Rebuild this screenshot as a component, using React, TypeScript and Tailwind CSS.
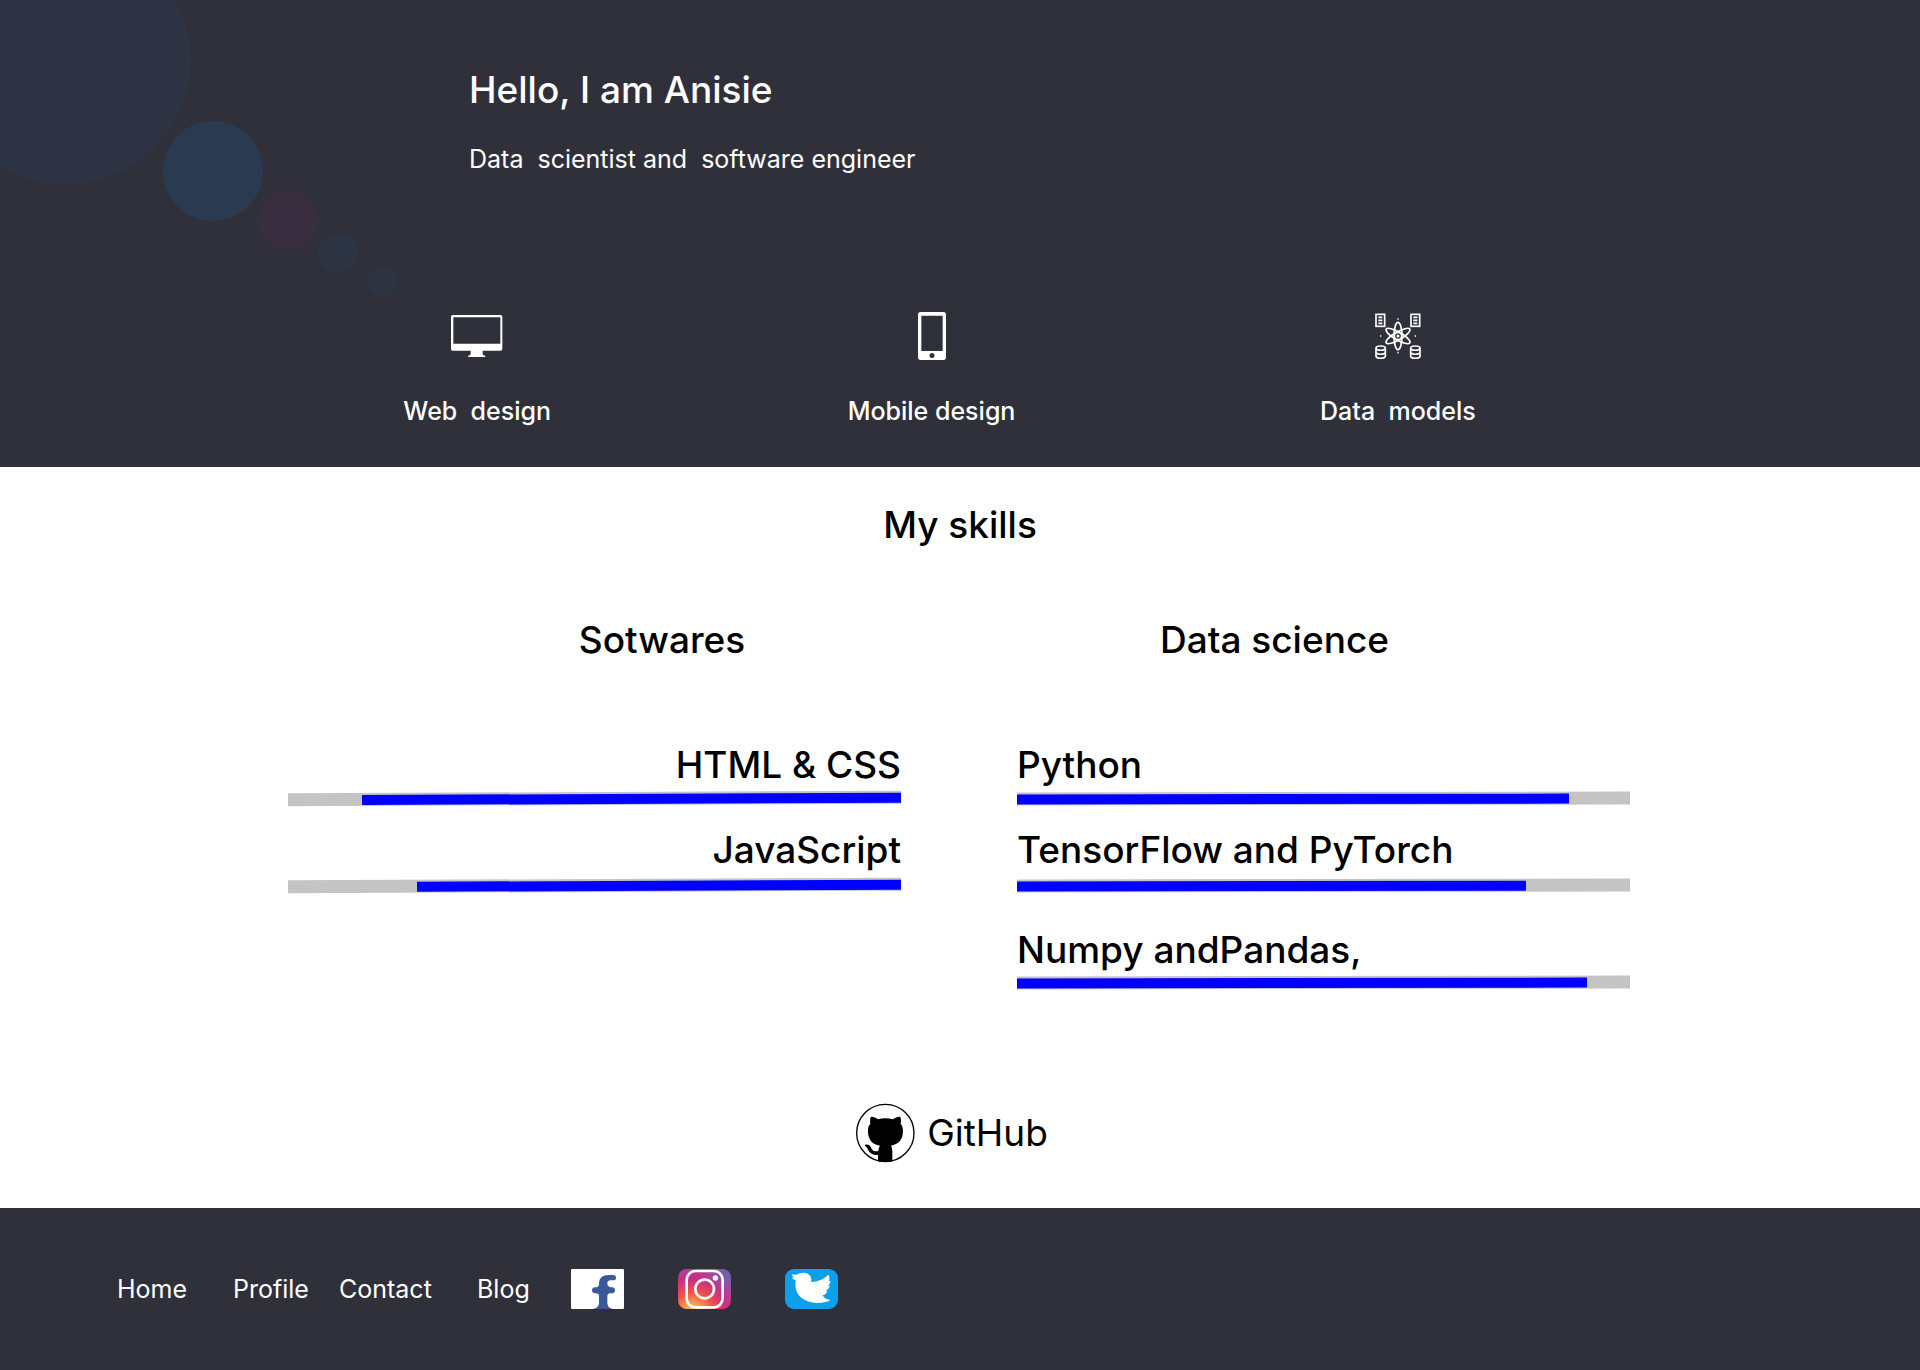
import React from "react";

const MonitorIcon = () => (
  <svg viewBox="0 0 156 126" className="h-[42px] w-[52px]" fill="white" aria-hidden="true">
    <path
      fillRule="evenodd"
      d="M5 0H149Q154 0 154 5V102Q154 107 149 107H95V117Q96 121 103 123V126H51V123Q58 121 59 117V107H5Q0 107 0 102V5Q0 0 5 0ZM7 7V86H148V7Z"
    />
  </svg>
);

const PhoneIcon = () => (
  <svg viewBox="0 0 84 144" className="h-12 w-7" fill="white" aria-hidden="true">
    <path
      fillRule="evenodd"
      d="M8 0H76Q84 0 84 8V136Q84 144 76 144H8Q0 144 0 136V8Q0 0 8 0ZM10 11V117H74V11ZM42 123A7.500 7.500 0 1 0 42 138A7.500 7.500 0 1 0 42 123Z"
    />
  </svg>
);

const Sheet = ({ x }: { x: number }) => (
  <g>
    <rect x={x} y="4" width="26" height="36" />
    <path d={`M${x + 7} 13h12M${x + 7} 22h12M${x + 7} 31h12`} />
  </g>
);

const Cylinder = ({ x }: { x: number }) => (
  <path
    d={`M${x} 105v24c0 9 28 9 28 0v-24c0-8-28-8-28 0c0 9 28 9 28 0M${x} 117c0 9 28 9 28 0`}
  />
);

const DataIcon = () => (
  <svg viewBox="0 0 138 138" className="size-[46px]" fill="none" stroke="white" strokeWidth="5" aria-hidden="true">
    <Sheet x={3} />
    <Sheet x={108} />
    <Cylinder x={3} />
    <Cylinder x={107} />
    <ellipse cx="69" cy="69" rx="12" ry="41" />
    <ellipse cx="69" cy="69" rx="12" ry="41" transform="rotate(60 69 69)" />
    <ellipse cx="69" cy="69" rx="12" ry="41" transform="rotate(-60 69 69)" />
    <circle cx="69" cy="69" r="11" />
    <circle cx="69" cy="69" r="2" />
    <path d="M67 18h4M15 69h4M119 69h4M67 119h4" />
  </svg>
);

const GitHubLogo = () => (
  <svg viewBox="0 0 177 180" className="h-[60px] w-[59px] shrink-0" aria-hidden="true">
    <clipPath id="disc">
      <circle cx="88" cy="90" r="87" />
    </clipPath>
    <circle cx="88" cy="90" r="86" fill="white" stroke="black" strokeWidth="4" />
    <path
      clipPath="url(#disc)"
      d="M44 42C50 40 58 44 66 49C80 45 97 45 111 49C119 44 127 40 133 42C136 50 135 56 134 62C141 70 142 82 140 94C138 112 127 124 105 128C108 134 109 140 109 146V178H66V155C50 158 42 150 38 144C35 138 33 131 26 128C26 124 34 123 39 126C46 131 46 141 54 144C60 146 64 145 67 143C68 136 69 132 72 128C50 124 40 113 37 96C34 80 36 70 43 62C42 56 42 48 44 42Z"
    />
  </svg>
);

const FacebookLogo = () => (
  <svg viewBox="0 0 159 120" className="h-10 w-[53px]" aria-hidden="true">
    <rect width="159" height="120" rx="4" fill="white" />
    <path
      fill="#3b5998"
      d="M66 120C78 118 84 112 84 100V80Q84 74 77 73H72Q63 72 63 64T72 55H78Q84 54 84 46C84 26 94 18 114 18H126Q135 18 135 26T126 34H119Q109 34 109 43T119 55H124Q132 56 132 64T124 73H117Q109 74 109 82V98C109 112 114 118 128 120Z"
    />
  </svg>
);

const InstagramLogo = () => (
  <svg viewBox="0 0 159 120" className="h-10 w-[53px]" aria-hidden="true">
    <defs>
      <radialGradient id="warm" gradientUnits="userSpaceOnUse" cx="45" cy="130" r="135">
        <stop offset="0" stopColor="#fdd269" />
        <stop offset="0.150" stopColor="#fbad50" />
        <stop offset="0.450" stopColor="#f15245" />
        <stop offset="0.750" stopColor="#c92d86" />
        <stop offset="1" stopColor="#a84a9c" />
      </radialGradient>
      <radialGradient id="cool" gradientUnits="userSpaceOnUse" cx="159" cy="10" r="75">
        <stop offset="0" stopColor="#4f6fb8" />
        <stop offset="1" stopColor="#9b46a7" stopOpacity="0" />
      </radialGradient>
    </defs>
    <rect width="159" height="120" rx="26" fill="url(#warm)" />
    <rect width="159" height="120" rx="26" fill="url(#cool)" />
    <g fill="none" stroke="white" strokeWidth="8">
      <rect x="26" y="6" width="108" height="109" rx="27" />
      <circle cx="80" cy="60" r="28" />
    </g>
    <circle cx="112" cy="27" r="8" fill="white" />
  </svg>
);

const TwitterLogo = () => (
  <svg viewBox="0 0 159 120" className="h-10 w-[53px]" aria-hidden="true">
    <rect width="159" height="120" rx="27" fill="#0b9fec" />
    <path
      fill="white"
      d="M21 15C25 17 29 17 34 17C40 13 48 11 57 11C70 12 79 20 79 32V39C98 38 117 30 130 17C135 24 134 30 131 36L136 35C136 42 133 47 128 50L134 50C132 58 128 62 122 65L127 66C125 73 120 77 113 79C117 88 126 92 137 93C125 100 112 102 98 102C70 102 45 90 36 70C31 58 30 46 32 34C27 33 23 30 21 25L28 26C24 23 21 20 21 15Z"
    />
  </svg>
);

const services = [
  { label: "Web  design", icon: <MonitorIcon /> },
  { label: "Mobile design", icon: <PhoneIcon /> },
  { label: "Data  models", icon: <DataIcon /> },
];

type Skill = { name: string; value: number; gap: string; space: string };

const software: Skill[] = [
  { name: "HTML & CSS", value: 88, gap: "mt-0.5", space: "" },
  { name: "JavaScript", value: 79, gap: "mt-1", space: "mt-5" },
];

const dataScience: Skill[] = [
  { name: "Python", value: 90, gap: "mt-0.5", space: "" },
  { name: "TensorFlow and PyTorch", value: 83, gap: "mt-1", space: "mt-5" },
  { name: "Numpy andPandas,", value: 93, gap: "mt-px", space: "mt-[33px]" },
];

const SkillBar = ({ skill, reversed }: { skill: Skill; reversed?: boolean }) => (
  <li className={skill.space}>
    <p className={reversed ? "text-right text-[37px]/[50px] font-medium" : "text-[37px]/[50px] font-medium"}>
      {skill.name}
    </p>
    <div
      role="progressbar"
      aria-label={skill.name}
      aria-valuenow={skill.value}
      aria-valuemin={0}
      aria-valuemax={100}
      className={`flex h-[13px] bg-[#c4c4c4] pt-0.5 pb-px ${skill.gap} ${
        reversed ? "-skew-y-[0.25deg] justify-end" : "-skew-y-[0.1deg]"
      }`}
    >
      <div className="bg-[#0000ff]" style={{ width: `${skill.value}%` }} />
    </div>
  </li>
);

const links = [
  { label: "Home", width: "w-[116px]" },
  { label: "Profile", width: "w-[106px]" },
  { label: "Contact", width: "w-[138px]" },
  { label: "Blog", width: "w-[94px]" },
];

export default function App() {
  return (
    <div className="bg-white font-['Inter',sans-serif] text-black">
      <header className="relative overflow-hidden bg-[#30303a] pt-[63px] pb-[38px] text-white">
        <div aria-hidden="true">
          <span className="absolute -top-[65px] -left-[59px] size-[250px] rounded-full bg-[#2e3443]" />
          <span className="absolute top-[121px] left-[163px] size-[100px] rounded-full bg-[#2a3a50]" />
          <span className="absolute top-[191px] left-[258px] size-[60px] rounded-full bg-[#392e3f]" />
          <span className="absolute top-[233px] left-[318px] size-10 rounded-full bg-[#2d3443]" />
          <span className="absolute top-[266px] left-[368px] size-[30px] rounded-full bg-[#2d3443]" />
        </div>
        <div className="relative pl-[469px]">
          <h1 className="text-[37px]/[54px] font-medium">Hello, I am Anisie</h1>
          <p className="mt-6 text-[25px]/[36px] whitespace-pre">Data  scientist and  software engineer</p>
        </div>
        <ul className="relative mt-[135px] grid grid-cols-[19fr_19fr_20fr] pr-[283px] pl-[250px]">
          {services.map((s) => (
            <li key={s.label} className="flex flex-col items-center">
              <div className="flex h-12 items-center">{s.icon}</div>
              <p className="mt-[33px] text-[25px]/[36px] font-medium whitespace-pre">{s.label}</p>
            </li>
          ))}
        </ul>
      </header>

      <main className="pt-[31px] pb-[45px]">
        <h2 className="text-center text-[37px]/[54px] font-medium">My skills</h2>
        <div className="mt-[61px] grid grid-cols-2 gap-x-[116px] pr-[290px] pl-[288px]">
          <section>
            <h3 className="pl-[135px] text-center text-[37px]/[54px] font-medium">Sotwares</h3>
            <ul className="mt-[73px]">
              {software.map((s) => (
                <SkillBar key={s.name} skill={s} reversed />
              ))}
            </ul>
          </section>
          <section>
            <h3 className="pr-[98px] text-center text-[37px]/[54px] font-medium">Data science</h3>
            <ul className="mt-[73px]">
              {dataScience.map((s) => (
                <SkillBar key={s.name} skill={s} />
              ))}
            </ul>
          </section>
        </div>
        <div className="mt-[114px] flex justify-center pr-4">
          <a href="#github" className="flex items-center gap-3 text-[37px]/[54px]">
            <GitHubLogo />
            GitHub
          </a>
        </div>
      </main>

      <footer className="bg-[#30303a] py-[61px] text-white">
        <nav className="flex items-center pl-[117px] text-[25px]/[36px]">
          {links.map((l) => (
            <div key={l.label} className={l.width}>
              <a href={`#${l.label.toLowerCase()}`}>{l.label}</a>
            </div>
          ))}
          <div className="flex gap-[54px]">
            <a href="#facebook" aria-label="Facebook">
              <FacebookLogo />
            </a>
            <a href="#instagram" aria-label="Instagram">
              <InstagramLogo />
            </a>
            <a href="#twitter" aria-label="Twitter">
              <TwitterLogo />
            </a>
          </div>
        </nav>
      </footer>
    </div>
  );
}
